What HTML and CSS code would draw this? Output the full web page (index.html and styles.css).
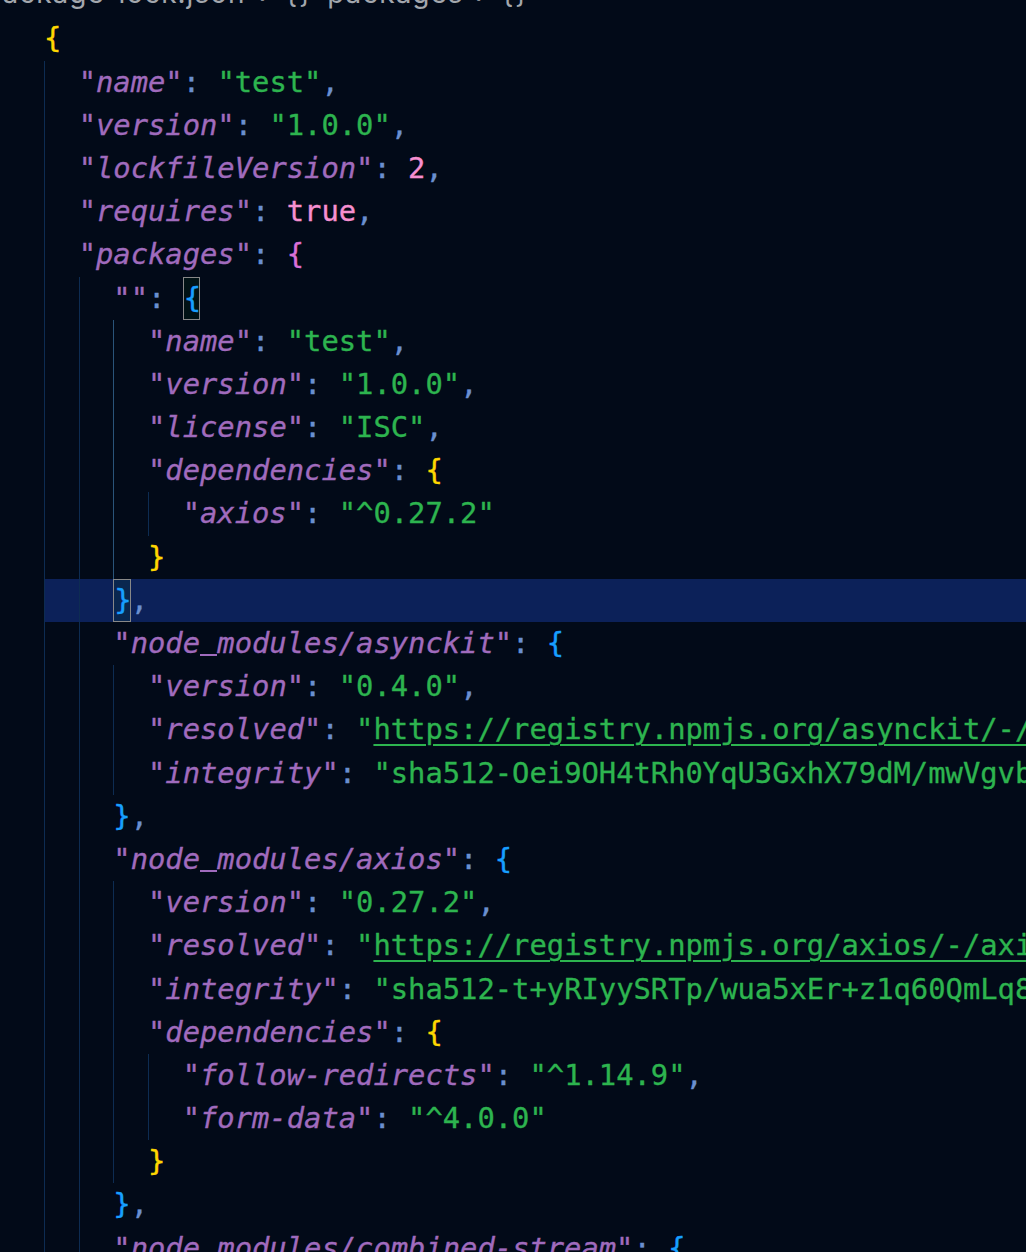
FILE: index.html
```html
<!DOCTYPE html>
<html lang="en">
<head>
<meta charset="utf-8">
<title>package-lock.json</title>
<link rel="stylesheet" href="styles.css">
</head>
<body>
<div class="editor">
  <div class="crumbs">
    <div class="crumbs-row">
      <span class="crumb file">package-lock.json</span>
      <span class="sep">›</span>
      <span class="crumb ico">{}</span>
      <span class="crumb">packages</span>
      <span class="sep">›</span>
      <span class="crumb ico">{}</span>
    </div>
  </div>
  <div class="code">
    <div class="ln"><span class="b1">{</span></div>
    <div class="ln"><i class="g"></i><span class="k">"name"</span><span class="p">: </span><span class="s">"test"</span><span class="p">,</span></div>
    <div class="ln"><i class="g"></i><span class="k">"version"</span><span class="p">: </span><span class="s">"1.0.0"</span><span class="p">,</span></div>
    <div class="ln"><i class="g"></i><span class="k">"lockfileVersion"</span><span class="p">: </span><span class="n">2</span><span class="p">,</span></div>
    <div class="ln"><i class="g"></i><span class="k">"requires"</span><span class="p">: </span><span class="n">true</span><span class="p">,</span></div>
    <div class="ln"><i class="g"></i><span class="k">"packages"</span><span class="p">: </span><span class="b2">{</span></div>
    <div class="ln"><i class="g"></i><i class="g"></i><span class="k">""</span><span class="p">: </span><span class="m b3">{</span></div>
    <div class="ln"><i class="g"></i><i class="g"></i><i class="g on"></i><span class="k">"name"</span><span class="p">: </span><span class="s">"test"</span><span class="p">,</span></div>
    <div class="ln"><i class="g"></i><i class="g"></i><i class="g on"></i><span class="k">"version"</span><span class="p">: </span><span class="s">"1.0.0"</span><span class="p">,</span></div>
    <div class="ln"><i class="g"></i><i class="g"></i><i class="g on"></i><span class="k">"license"</span><span class="p">: </span><span class="s">"ISC"</span><span class="p">,</span></div>
    <div class="ln"><i class="g"></i><i class="g"></i><i class="g on"></i><span class="k">"dependencies"</span><span class="p">: </span><span class="b1">{</span></div>
    <div class="ln"><i class="g"></i><i class="g"></i><i class="g on"></i><i class="g"></i><span class="k">"axios"</span><span class="p">: </span><span class="s">"^0.27.2"</span></div>
    <div class="ln"><i class="g"></i><i class="g"></i><i class="g on"></i><span class="b1">}</span></div>
    <div class="ln cur"><i class="g"></i><i class="g"></i><span class="m b3">}</span><span class="p">,</span></div>
    <div class="ln"><i class="g"></i><i class="g"></i><span class="k">"node<span class="us">_</span>modules/asynckit"</span><span class="p">: </span><span class="b3">{</span></div>
    <div class="ln"><i class="g"></i><i class="g"></i><i class="g"></i><span class="k">"version"</span><span class="p">: </span><span class="s">"0.4.0"</span><span class="p">,</span></div>
    <div class="ln"><i class="g"></i><i class="g"></i><i class="g"></i><span class="k">"resolved"</span><span class="p">: </span><span class="s">"</span><span class="s u">https://registry.npmjs.org/asynckit/-/asynckit-0.4.0.tgz</span><span class="s">"</span><span class="p">,</span></div>
    <div class="ln"><i class="g"></i><i class="g"></i><i class="g"></i><span class="k">"integrity"</span><span class="p">: </span><span class="s">"sha512-Oei9OH4tRh0YqU3GxhX79dM/mwVgvbZJaSNaRqR3ABbSyVrOPs4dR3A5Fbmeh/q6CKLk8jNJDY5o2KVd+zzg=="</span></div>
    <div class="ln"><i class="g"></i><i class="g"></i><span class="b3">}</span><span class="p">,</span></div>
    <div class="ln"><i class="g"></i><i class="g"></i><span class="k">"node<span class="us">_</span>modules/axios"</span><span class="p">: </span><span class="b3">{</span></div>
    <div class="ln"><i class="g"></i><i class="g"></i><i class="g"></i><span class="k">"version"</span><span class="p">: </span><span class="s">"0.27.2"</span><span class="p">,</span></div>
    <div class="ln"><i class="g"></i><i class="g"></i><i class="g"></i><span class="k">"resolved"</span><span class="p">: </span><span class="s">"</span><span class="s u">https://registry.npmjs.org/axios/-/axios-0.27.2.tgz</span><span class="s">"</span><span class="p">,</span></div>
    <div class="ln"><i class="g"></i><i class="g"></i><i class="g"></i><span class="k">"integrity"</span><span class="p">: </span><span class="s">"sha512-t+yRIyySRTp/wua5xEr+z1q60QmLq8ABsS5O9Me1AsE5dfKqgnCFzwiCZZ/cGNd1lq4/7akDWMxdhVlucjmnOQ=="</span><span class="p">,</span></div>
    <div class="ln"><i class="g"></i><i class="g"></i><i class="g"></i><span class="k">"dependencies"</span><span class="p">: </span><span class="b1">{</span></div>
    <div class="ln"><i class="g"></i><i class="g"></i><i class="g"></i><i class="g"></i><span class="k">"follow-redirects"</span><span class="p">: </span><span class="s">"^1.14.9"</span><span class="p">,</span></div>
    <div class="ln"><i class="g"></i><i class="g"></i><i class="g"></i><i class="g"></i><span class="k">"form-data"</span><span class="p">: </span><span class="s">"^4.0.0"</span></div>
    <div class="ln"><i class="g"></i><i class="g"></i><i class="g"></i><span class="b1">}</span></div>
    <div class="ln"><i class="g"></i><i class="g"></i><span class="b3">}</span><span class="p">,</span></div>
    <div class="ln"><i class="g"></i><i class="g"></i><span class="k">"node<span class="us">_</span>modules/combined-stream"</span><span class="p">: </span><span class="b3">{</span></div>
  </div>
</div>
</body>
</html>
```

FILE: styles.css
```css
html, body {
  margin: 0;
  padding: 0;
  background: #020a18;
  overflow: hidden;
}

.editor {
  width: 1026px;
  height: 1252px;
  overflow: hidden;
  background: #020a18;
}

.crumbs {
  height: 17.4px;
  overflow: hidden;
}

.crumbs-row {
  display: flex;
  align-items: baseline;
  font-family: "Inter", "Liberation Sans", sans-serif;
  font-size: 28px;
  line-height: 28px;
  letter-spacing: 1px;
  color: #a3a7ad;
  white-space: pre;
  margin-top: -21px;
  margin-left: -16px;
}

.crumb.file {
  margin-right: 14px;
}

.sep {
  color: #8c9096;
  margin-right: 14px;
}

.crumb.ico {
  margin-right: 14px;
  letter-spacing: 2px;
}

.crumbs-row .crumb:nth-child(4) {
  margin-right: 12px;
}

.code {
  padding-left: 44px;
  font-family: "DejaVu Sans Mono", monospace;
  font-size: 28.8px;
  color: #c8d0e0;
  -webkit-text-stroke: 0.35px currentColor;
}

.ln {
  display: flex;
  height: 43.2px;
  line-height: 43.2px;
  white-space: pre;
}

.ln > * {
  flex: none;
}

.ln.cur {
  background: #0c2159;
}

.g {
  display: block;
  width: 2ch;
  box-sizing: border-box;
  border-left: 1px solid #0d2c52;
}

.g.on {
  border-left-color: #2a5479;
}

.k {
  color: #a06bbd;
  font-style: italic;
}

.us {
  display: inline-block;
  width: 1ch;
  line-height: 1;
  vertical-align: baseline;
  color: transparent;
  -webkit-text-stroke: 0;
  border-bottom: 2px solid #a06bbd;
  position: relative;
  top: -4px;
}

.s {
  color: #2db44f;
}

.u {
  text-decoration: underline;
  text-decoration-thickness: 2px;
  text-underline-offset: 5px;
}

.p {
  color: #6a8fd0;
}

.n {
  color: #f68fd0;
}

.b1 {
  color: #ffd700;
}

.b2 {
  color: #da70d6;
}

.b3 {
  color: #179fff;
}

.m {
  width: 1ch;
  box-sizing: border-box;
  border: 1px solid #888888;
  line-height: 41.2px;
  text-align: center;
  background: rgba(0, 100, 0, 0.1);
}
```
